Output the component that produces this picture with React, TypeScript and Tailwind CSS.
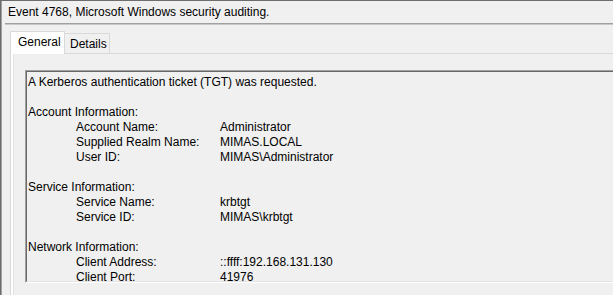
import React from "react";

const font = { fontFamily: '"Liberation Sans", Arial, sans-serif' };

type Row = { kind: "text" | "head" | "pair" | "blank"; a?: string; b?: string };

const rows: Row[] = [
  { kind: "text", a: "A Kerberos authentication ticket (TGT) was requested." },
  { kind: "blank" },
  { kind: "head", a: "Account Information:" },
  { kind: "pair", a: "Account Name:", b: "Administrator" },
  { kind: "pair", a: "Supplied Realm Name:", b: "MIMAS.LOCAL" },
  { kind: "pair", a: "User ID:", b: "MIMAS\\Administrator" },
  { kind: "blank" },
  { kind: "head", a: "Service Information:" },
  { kind: "pair", a: "Service Name:", b: "krbtgt" },
  { kind: "pair", a: "Service ID:", b: "MIMAS\\krbtgt" },
  { kind: "blank" },
  { kind: "head", a: "Network Information:" },
  { kind: "pair", a: "Client Address:", b: "::ffff:192.168.131.130" },
  { kind: "pair", a: "Client Port:", b: "41976" },
];

export default function App() {
  return (
    <div
      className="w-[613px] h-[295px] overflow-hidden bg-[#f0f0f0] border-t border-l border-[#6d6d6d] text-[12px] text-black"
      style={font}
    >
      <div className="h-full border-l border-[#a0a0a0] flex flex-col">
        {/* Title */}
        <div className="h-[22px] leading-[23px] pl-[6px] whitespace-nowrap">
          Event 4768, Microsoft Windows security auditing.
        </div>
        {/* Separator */}
        <div className="ml-[3px] h-[2px] border-t border-[#a0a0a0] border-b border-b-[#c8c8c8]" />
        {/* Tab control */}
        <div className="ml-[8px] mt-[6px] flex flex-col">
          <div className="flex items-end h-[22px]">
            <div className="relative z-10 h-[23px] mb-[-1px] w-[55px] bg-white border border-b-0 border-[#d9d9d9] pl-[7px] leading-[20px]">
              General
            </div>
            <div className="h-[20px] w-[45px] border-t border-r border-[#d9d9d9] pl-[5px] leading-[21px]">
              Details
            </div>
          </div>
          <div className="border-t border-l border-[#d9d9d9] bg-white pl-[2px]">
            <div className="bg-[#f0f0f0] border-l border-[#e3e3e3] pl-[11px] pt-[16px] h-[260px]">
              <div className="w-[700px] h-[213px] border-t border-l border-[#a0a0a0] border-b border-b-white">
                <div className="h-full border-t border-l border-[#696969] border-b border-b-[#e3e3e3] pl-[1px] pt-[3px]">
                  {rows.map((r, i) => {
                    const last = i === rows.length - 1;
                    if (r.kind === "blank") return <div key={i} className="h-[15px]" />;
                    if (r.kind === "pair")
                      return (
                        <div
                          key={i}
                          className={`flex leading-[15px] whitespace-nowrap pl-[48px] ${last ? "h-[10px]" : "h-[15px]"}`}
                        >
                          <span className="w-[144px] shrink-0">{r.a}</span>
                          <span>{r.b}</span>
                        </div>
                      );
                    return (
                      <div key={i} className="h-[15px] leading-[15px] whitespace-nowrap">
                        {r.a}
                      </div>
                    );
                  })}
                </div>
              </div>
            </div>
          </div>
        </div>
      </div>
    </div>
  );
}
